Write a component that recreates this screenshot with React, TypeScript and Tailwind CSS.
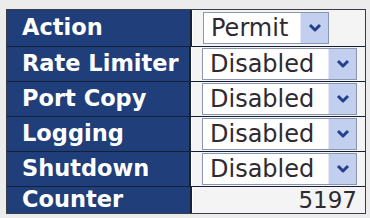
import React from 'react';

const rows = [
  { label: 'Action', value: 'Permit', kind: 'select', width: 'w-[126px]', h: 'h-[36px]' },
  { label: 'Rate Limiter', value: 'Disabled', kind: 'select', width: 'w-[155px]', h: 'h-[35px]' },
  { label: 'Port Copy', value: 'Disabled', kind: 'select', width: 'w-[155px]', h: 'h-[35px]' },
  { label: 'Logging', value: 'Disabled', kind: 'select', width: 'w-[155px]', h: 'h-[35px]' },
  { label: 'Shutdown', value: 'Disabled', kind: 'select', width: 'w-[155px]', h: 'h-[35px]' },
  { label: 'Counter', value: '5197', kind: 'text', width: '', h: 'h-[27px]' },
];

const Chevron = () => (
  <svg width="14" height="10" viewBox="0 0 14 10">
    <path d="M2 2 L7 7 L12 2" fill="none" stroke="#22408c" strokeWidth="3" strokeLinejoin="round" />
  </svg>
);

const FakeSelect = ({ value, width }: { value: string; width: string }) => (
  <div className={`${width} h-[32px] flex items-stretch border border-[#8a96ad] bg-white`}>
    <span className="flex-1 pl-[7px] leading-[30px] text-[24px] text-[#2e2a30]">{value}</span>
    <span className="w-[28px] flex items-center justify-center bg-[#c3cfee] border-l border-[#e2e8f6]">
      <Chevron />
    </span>
  </div>
);

export default function App() {
  return (
    <div className="w-[370px] h-[218px] bg-[#ececec] pt-[9px] pl-[6px]" style={{ fontFamily: '"DejaVu Sans", Verdana, sans-serif' }}>
      <div className="w-[360px] border border-[#3a3d45] bg-[#f4f4f4]">
        {rows.map((row, i) => (
          <div key={row.label} className={`flex ${row.h} ${i > 0 ? 'border-t border-[#14203a]' : ''}`}>
            <div className="w-[185px] bg-[#1f3e7a] border-r-2 border-[#1a2136] pl-[15px] flex items-center text-white font-bold text-[22.5px]">
              {row.label}
            </div>
            <div className="flex-1 flex items-center pl-[10px] pr-[8px] border-l border-white">
              {row.kind === 'select' ? (
                <FakeSelect value={row.value} width={row.width} />
              ) : (
                <span className="ml-auto text-[23px] leading-none text-[#2e2a30]">{row.value}</span>
              )}
            </div>
          </div>
        ))}
      </div>
    </div>
  );
}
